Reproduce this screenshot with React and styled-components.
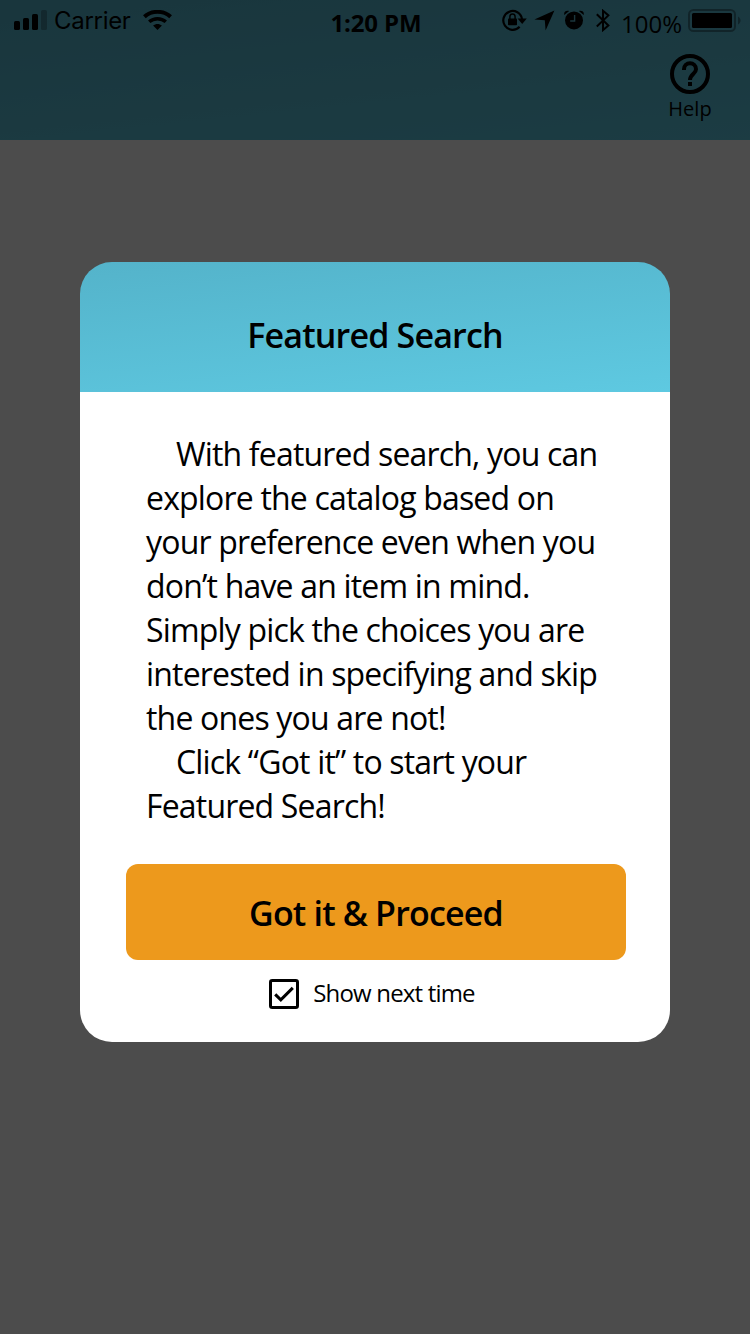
import React, { useState } from "react";
import styled, { createGlobalStyle } from "styled-components";

const GlobalStyle = createGlobalStyle`
  * { box-sizing: border-box; }
  body { margin: 0; background: #fff; font-family: "Open Sans", sans-serif; color: #000; }
`;

const Screen = styled.div`
  position: relative;
  width: 750px;
  height: 1334px;
  overflow: hidden;
  background: #fff;
`;

const Header = styled.header`
  height: 140px;
  background: linear-gradient(174deg, #55b4cc, #5ec8e0);
`;

const StatusBar = styled.div`
  display: grid;
  grid-template-columns: 1fr auto 1fr;
  height: 44px;
  padding: 0 9px 0 14px;
`;

const StatusGroup = styled.div`
  display: flex;
  align-items: flex-start;
  justify-content: ${(p) => (p.$end ? "flex-end" : "flex-start")};
  svg { display: block; flex: none; }
`;

const Carrier = styled.span`
  width: 76px;
  font: 400 24px/28px Inter, sans-serif;
  letter-spacing: -0.3px;
  margin: 7px 13px 0 7px;
`;

const Time = styled.span`
  font-size: 24px;
  font-weight: 700;
  line-height: 32px;
  margin: 7px 3px 0 0;
  letter-spacing: -0.1px;
`;

const Percent = styled.span`
  font-size: 24px;
  line-height: 32px;
  margin: 8px 6px 0 11px;
`;

const Glyph = styled.svg`
  margin: ${(p) => p.$m};
`;

const Toolbar = styled.nav`
  display: flex;
  justify-content: flex-end;
  padding: 9px 38px 0 0;
`;

const HelpButton = styled.button`
  display: flex;
  flex-direction: column;
  align-items: center;
  width: 44px;
  padding: 0;
  border: 0;
  background: none;
  color: #000;
  font: 400 20px/28px "Open Sans", sans-serif;
  svg { display: block; }
`;

const Backdrop = styled.div`
  position: absolute;
  inset: 0;
  display: flex;
  justify-content: center;
  align-items: flex-start;
  padding-top: 262px;
  background: rgba(0, 0, 0, 0.7);
`;

const Dialog = styled.section`
  width: 590px;
  height: 780px;
`;

const DialogHeader = styled.div`
  height: 130px;
  padding-top: 50px;
  text-align: center;
  border-radius: 32px 32px 0 0;
  background: linear-gradient(174deg, #54b3ca, #5ec9e1);
`;

const DialogBody = styled.div`
  height: 650px;
  display: flex;
  flex-direction: column;
  align-items: center;
  border-radius: 0 0 32px 32px;
  background: #fff;
`;

const DialogTitle = styled.h1`
  margin: 0;
  font-size: 34px;
  font-weight: 600;
  line-height: 46px;
  letter-spacing: -0.82px;
`;

const Message = styled.div`
  width: 458px;
  height: 472px;
  padding-top: 40px;
  font-size: 32px;
  line-height: 44px;
  letter-spacing: -0.82px;
  white-space: nowrap;
`;

const Paragraph = styled.p`
  margin: 0;
  text-indent: 30px;
`;

const ProceedButton = styled.button`
  width: 500px;
  height: 96px;
  flex: none;
  margin-left: 2px;
  padding: 2px 0 0;
  border: 0;
  border-radius: 12px;
  background: #ed991c;
  color: #000;
  font: 600 34px/46px "Open Sans", sans-serif;
  letter-spacing: -0.82px;
`;

const CheckRow = styled.label`
  display: flex;
  align-items: center;
  gap: 14px;
  margin-top: 17px;
  margin-right: 6px;
  font-size: 24px;
  line-height: 30px;
  letter-spacing: -0.82px;
  svg { display: block; margin-top: 2px; }
`;

const HiddenCheckbox = styled.input`
  position: absolute;
  opacity: 0;
`;

function SignalIcon() {
  return (
    <Glyph $m="10px 0 0" width="33" height="20">
      <rect x="0" y="11" width="6" height="9" rx="1.6" />
      <rect x="9" y="8" width="6" height="12" rx="1.6" />
      <rect x="18" y="4" width="6" height="16" rx="1.6" />
      <rect x="27" y="0" width="6" height="20" rx="1.6" opacity="0.25" />
    </Glyph>
  );
}

function WifiIcon() {
  return (
    <Glyph $m="10px 0 0" width="29" height="20" viewBox="0 0 29 20" fill="none" stroke="#000">
      <path d="M1.4 6.8C8.6 .2 20.4 .2 27.6 6.8" strokeWidth="4" />
      <path d="M6.2 11.7C10.8 7.6 18.2 7.6 22.8 11.7" strokeWidth="3.5" />
      <path d="M14.5 20l-4.4-4.5c2.5-2.1 6.3-2.1 8.8 0z" fill="#000" stroke="none" />
    </Glyph>
  );
}

function RotationLockIcon() {
  return (
    <Glyph $m="9px 7px 0 0" width="25" height="22" viewBox="0 0 25 22">
      <path d="M17.6 17.8A9.4 9.4 0 1 1 20 10" fill="none" stroke="#000" strokeWidth="2.2" />
      <path d="M15.6 9.6h9.2l-4.6 5.4z" />
      <rect x="6" y="9.4" width="9" height="6.8" rx="0.8" />
      <path d="M7.9 10V7.7a2.6 2.6 0 0 1 5.2 0V10" fill="none" stroke="#000" strokeWidth="1.5" />
    </Glyph>
  );
}

function LocationIcon() {
  return (
    <Glyph $m="10px 9px 0 0" width="21" height="21" viewBox="0 0 21 21">
      <path d="M20.4 .4L11.6 20.4L10.8 10.3L.4 9.5z" />
    </Glyph>
  );
}

function AlarmIcon() {
  return (
    <Glyph $m="10px 12px 0 0" width="20" height="20" viewBox="0 0 20 20">
      <circle cx="10" cy="10.4" r="9" />
      <path d="M.3 5.1C-.5 2 2 .1 5.2 1.1zM19.7 5.1C20.5 2 18 .1 14.8 1.1z" />
      <path d="M10.6 5v6H6.2" fill="none" stroke="#5ab4c8" strokeWidth="1.4" />
    </Glyph>
  );
}

function BluetoothIcon() {
  return (
    <Glyph $m="9px 0 0" width="14" height="23" viewBox="0 0 14 23" fill="none" stroke="#000" strokeWidth="2">
      <path d="M.8 5.3L12.4 16.5L7 21.1V1.8L12.4 6.4L.8 17.5" />
    </Glyph>
  );
}

function BatteryIcon() {
  return (
    <Glyph $m="9px 0 0" width="53" height="23" viewBox="0 0 53 23">
      <rect x="1" y="1" width="46" height="21" rx="4.5" fill="none" stroke="#000" strokeWidth="2" opacity="0.35" />
      <rect x="4" y="4" width="40" height="15" rx="1.5" />
      <path d="M50 7.5c3.4 1.5 3.4 6.5 0 8z" opacity="0.35" />
    </Glyph>
  );
}

function HelpIcon() {
  return (
    <svg width="42" height="42" viewBox="0 0 42 42">
      <circle cx="21" cy="21" r="18" fill="none" stroke="#000" strokeWidth="4" />
      <path d="M15 17v-.8a6 6 0 0 1 12 0c0 4.8-6 5-6 10.8" fill="none" stroke="#000" strokeWidth="4" />
      <rect x="19" y="29" width="4" height="4" />
    </svg>
  );
}

function CheckboxIcon({ checked }) {
  return (
    <svg width="30" height="30" viewBox="0 0 30 30" fill="none" stroke="#000">
      <rect x="1.5" y="1.5" width="27" height="27" rx="1.8" strokeWidth="3" />
      {checked && <path d="M6.2 15.4L11.8 20.9L23.8 8.9" strokeWidth="3" />}
    </svg>
  );
}

export default function App() {
  const [showNext, setShowNext] = useState(true);
  return (
    <>
      <GlobalStyle />
      <Screen>
        <Header>
          <StatusBar>
            <StatusGroup>
              <SignalIcon />
              <Carrier>Carrier</Carrier>
              <WifiIcon />
            </StatusGroup>
            <Time>1:20 PM</Time>
            <StatusGroup $end>
              <RotationLockIcon />
              <LocationIcon />
              <AlarmIcon />
              <BluetoothIcon />
              <Percent>100%</Percent>
              <BatteryIcon />
            </StatusGroup>
          </StatusBar>
          <Toolbar>
            <HelpButton>
              <HelpIcon />
              Help
            </HelpButton>
          </Toolbar>
        </Header>
        <Backdrop>
          <Dialog role="dialog" aria-labelledby="dialog-title">
            <DialogHeader>
              <DialogTitle id="dialog-title">Featured Search</DialogTitle>
            </DialogHeader>
            <DialogBody>
              <Message>
                <Paragraph>
                  With featured search, you can<br />
                  explore the catalog based on<br />
                  your preference even when you<br />
                  don’t have an item in mind.<br />
                  Simply pick the choices you are<br />
                  interested in specifying and skip<br />
                  the ones you are not!
                </Paragraph>
                <Paragraph>
                  Click “Got it” to start your<br />
                  Featured Search!
                </Paragraph>
              </Message>
              <ProceedButton>Got it &amp; Proceed</ProceedButton>
              <CheckRow>
                <HiddenCheckbox
                  type="checkbox"
                  checked={showNext}
                  onChange={(e) => setShowNext(e.target.checked)}
                />
                <CheckboxIcon checked={showNext} />
                Show next time
              </CheckRow>
            </DialogBody>
          </Dialog>
        </Backdrop>
      </Screen>
    </>
  );
}
